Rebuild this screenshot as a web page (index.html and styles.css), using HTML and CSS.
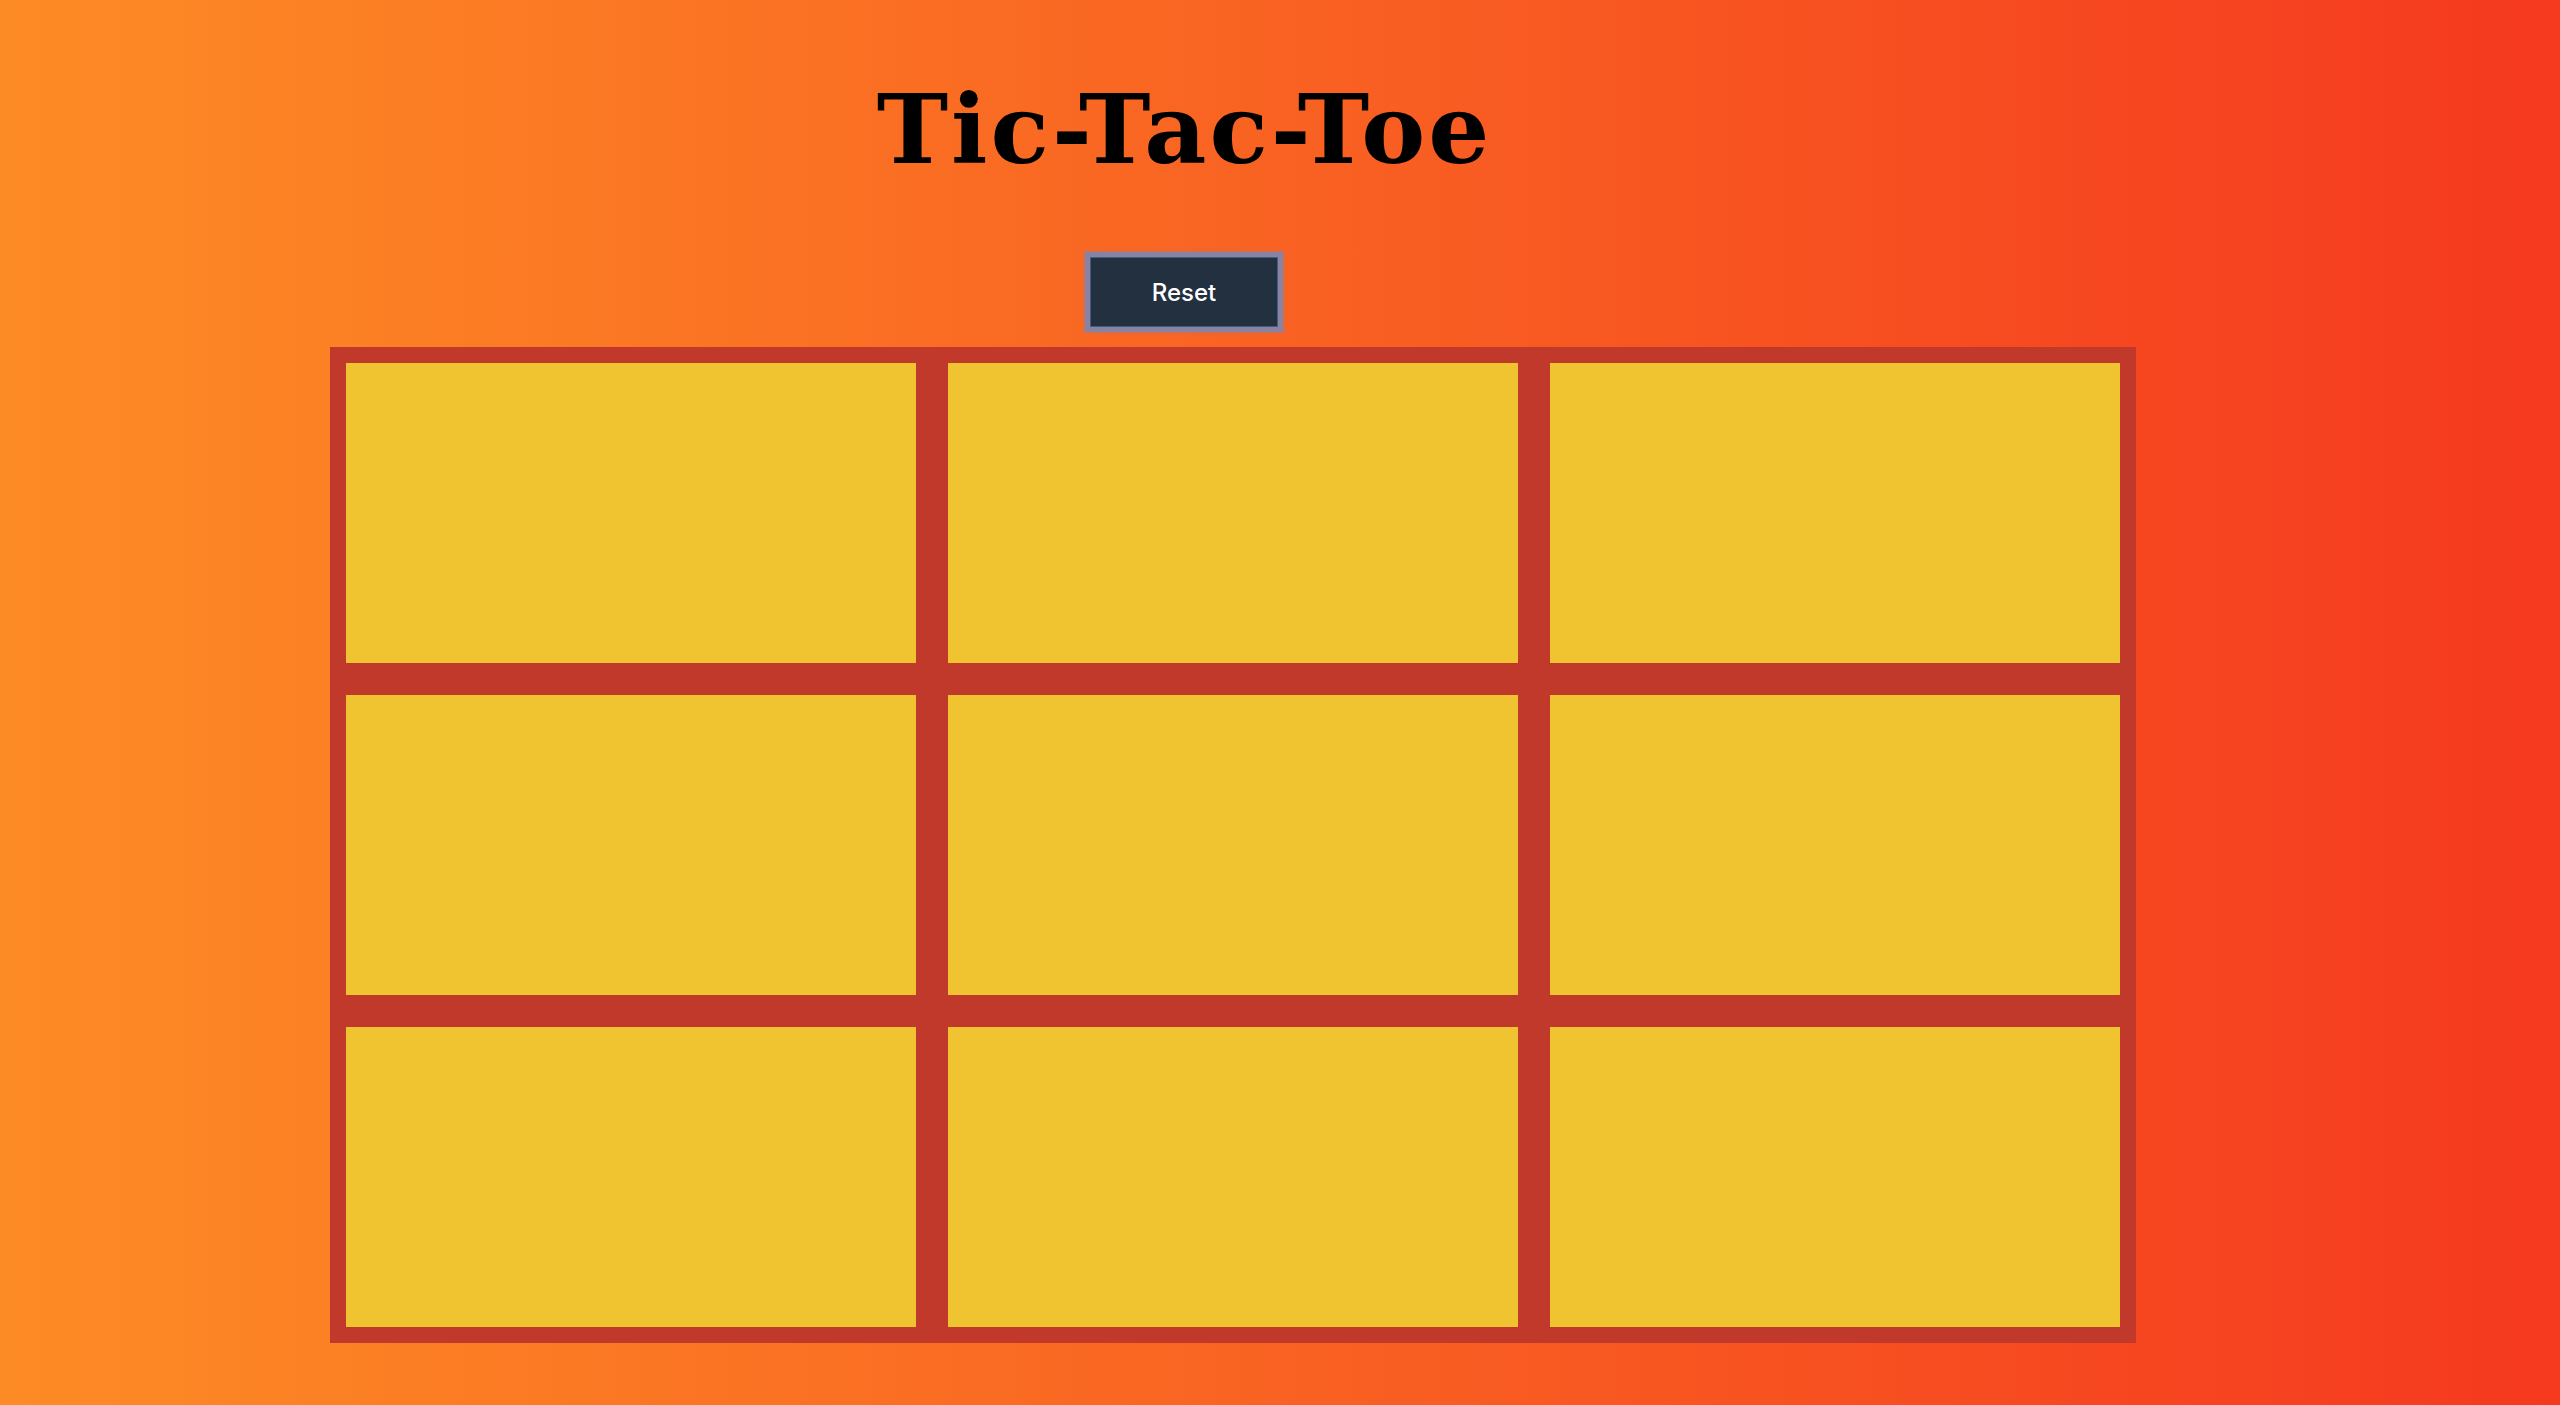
FILE: index.html
```html
<!DOCTYPE html>
<html lang="en">
<head>
<meta charset="utf-8">
<title>Tic-Tac-Toe</title>
<link rel="stylesheet" href="styles.css">
</head>
<body>
<div class="page">
  <header class="header">
    <h1 class="title">Tic-Tac-Toe</h1>
    <button class="reset" type="button">Reset</button>
  </header>
  <div class="board">
    <div class="cell"></div>
    <div class="cell"></div>
    <div class="cell"></div>
    <div class="cell"></div>
    <div class="cell"></div>
    <div class="cell"></div>
    <div class="cell"></div>
    <div class="cell"></div>
    <div class="cell"></div>
  </div>
</div>
</body>
</html>
```
FILE: styles.css
```css
html, body {
  margin: 0;
  padding: 0;
}
body {
  min-height: 1405px;
  background: linear-gradient(to right, #fd8b25, #f5391f);
  font-family: "DejaVu Serif", serif;
}
.page {
  padding-left: 330px;
  display: flex;
  flex-direction: column;
}
.header {
  width: 1706px;
  display: flex;
  flex-direction: column;
  align-items: center;
}
.title {
  margin: 81px 0 0 3px;
  font-family: "DejaVu Serif", serif;
  font-weight: bold;
  font-size: 96px;
  line-height: 97px;
  letter-spacing: 3px;
  color: #000;
}
.reset {
  margin-top: 79px;
  margin-left: 2px;
  width: 188px;
  height: 70px;
  box-sizing: border-box;
  background: #223040;
  color: #fff;
  font-family: Inter, "Noto Sans", sans-serif;
  font-weight: 500;
  font-size: 24px;
  border: 1px solid #3f5f80;
  box-shadow: 0 0 0 5px #8a82a0, 0 0 2px 6px rgba(138, 130, 160, 0.6);
  padding: 0;
}
.board {
  margin-top: 20px;
  width: 1806px;
  box-sizing: border-box;
  padding: 16px;
  background: #c0392b;
  display: grid;
  grid-template-columns: repeat(3, 570px);
  grid-template-rows: repeat(3, 300px);
  gap: 32px;
}
.cell {
  background: #f0c330;
}
```
